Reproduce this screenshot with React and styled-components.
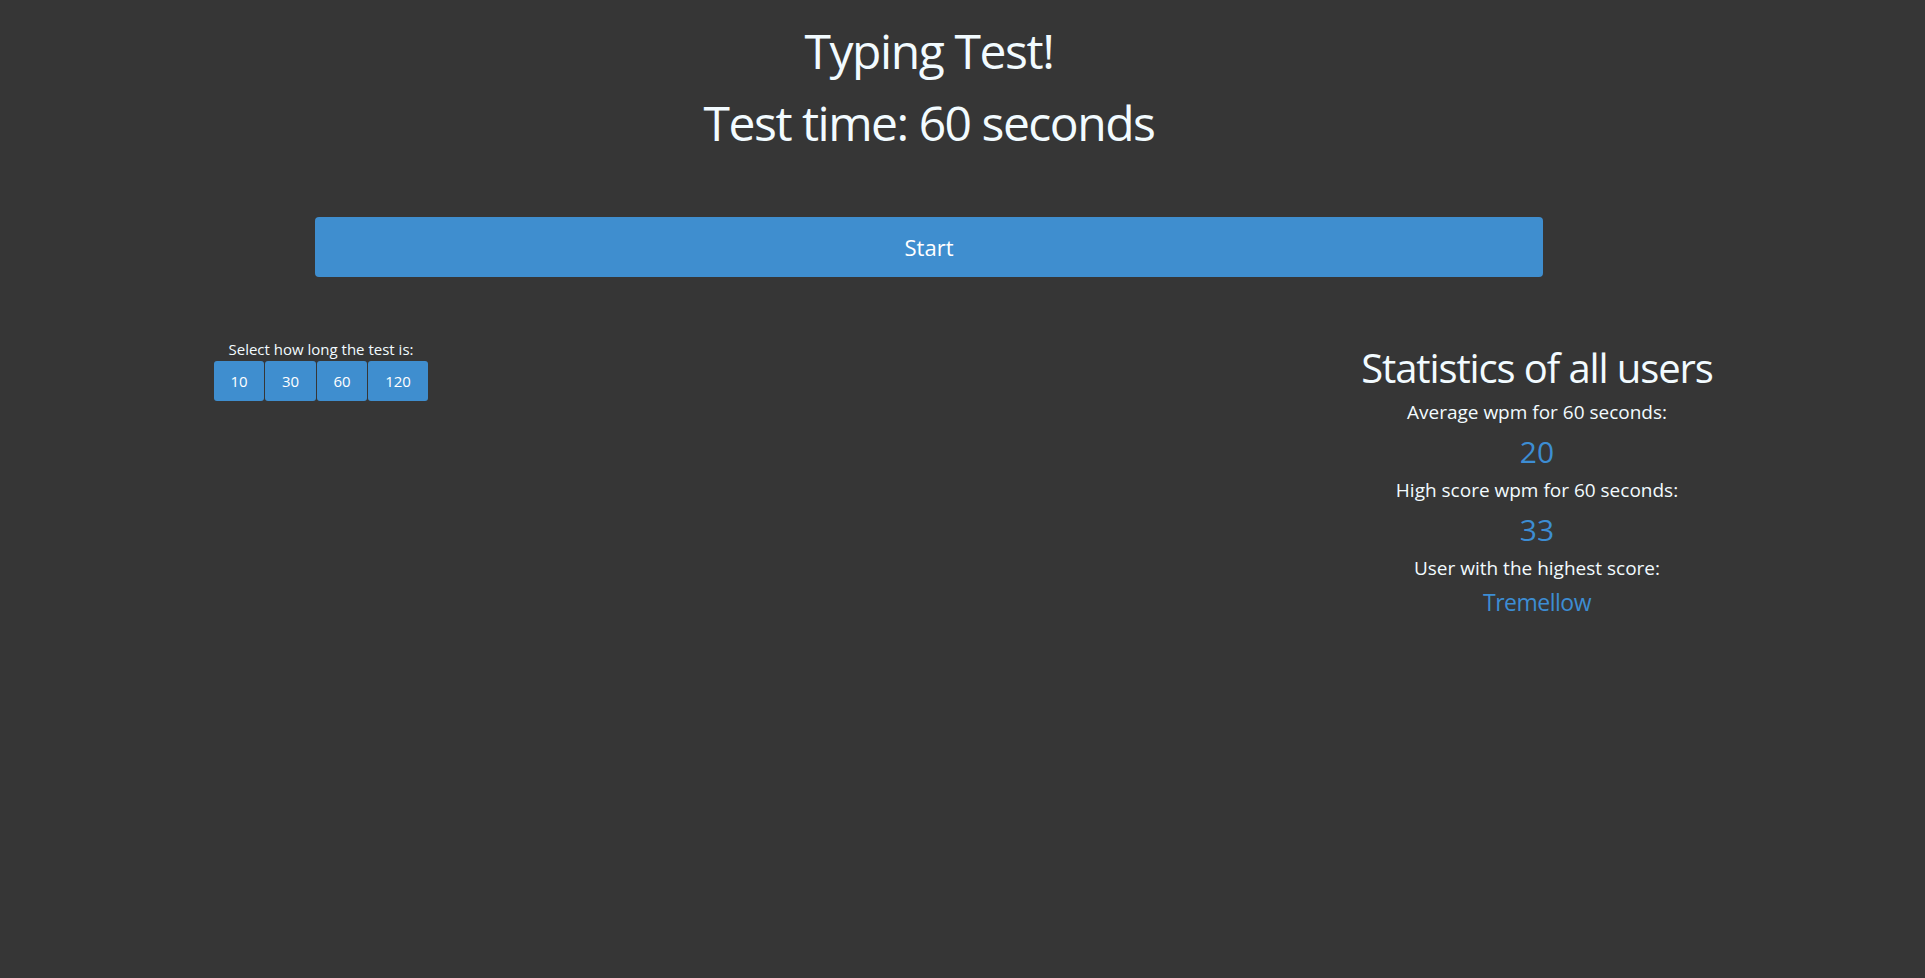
import React from "react";
import styled, { createGlobalStyle } from "styled-components";

const Global = createGlobalStyle`
  html, body { margin: 0; padding: 0; background: #363636; }
  body { font-family: "Open Sans", "Noto Sans", sans-serif; color: #f2fbff; }
  * { box-sizing: border-box; }
`;

const Page = styled.div`
  min-height: 978px;
  background: #363636;
  padding-top: 15px;
`;

const Header = styled.header`
  width: 1858px;
  text-align: center;
`;

const Title = styled.h1`
  margin: 0;
  font-size: 48px;
  font-weight: 400;
  line-height: 72px;
  letter-spacing: ${(p) => p.$ls}px;
`;

const StartButton = styled.button`
  display: block;
  margin: 58px 0 0 315px;
  width: 1228px;
  height: 60px;
  border: none;
  border-radius: 4px;
  background: #3f8ecf;
  color: #ffffff;
  font-family: inherit;
  font-size: 22px;
  cursor: pointer;
`;

const Row = styled.div`
  display: grid;
  grid-template-columns: 642px 1fr 776px;
  margin-top: 62px;
`;

const DurationPanel = styled.div`
  display: flex;
  flex-direction: column;
  align-items: center;
  gap: 2px;
`;

const Label = styled.div`
  font-size: 15px;
  line-height: 20px;
`;

const ButtonGroup = styled.div`
  display: flex;
  gap: 1px;
`;

const DurationButton = styled.button`
  width: ${(p) => p.$w}px;
  height: 40px;
  border: none;
  border-radius: 3px;
  background: #3f8ecf;
  color: #ffffff;
  font-family: inherit;
  font-size: 15px;
  cursor: pointer;
`;

const Stats = styled.div`
  grid-column: 3;
  display: flex;
  flex-direction: column;
  align-items: center;
  padding-top: 4px;
`;

const StatsTitle = styled.h2`
  margin: 0;
  font-size: 40px;
  font-weight: 400;
  line-height: 50px;
  letter-spacing: -1.1px;
`;

const StatLabel = styled.div`
  font-size: 19px;
  line-height: 39px;
`;

const StatValue = styled.div`
  font-size: ${(p) => p.$size}px;
  line-height: ${(p) => p.$lh}px;
  letter-spacing: ${(p) => p.$ls || 0}px;
  color: #3d8dd3;
`;

export default function App() {
  return (
    <>
      <Global />
      <Page>
        <Header>
          <Title $ls={-1.4}>Typing Test!</Title>
          <Title as="h2" $ls={-1.5}>Test time: 60 seconds</Title>
        </Header>
        <StartButton>Start</StartButton>
        <Row>
          <DurationPanel>
            <Label>Select how long the test is:</Label>
            <ButtonGroup>
              <DurationButton $w={50}>10</DurationButton>
              <DurationButton $w={51}>30</DurationButton>
              <DurationButton $w={50}>60</DurationButton>
              <DurationButton $w={60}>120</DurationButton>
            </ButtonGroup>
          </DurationPanel>
          <Stats>
            <StatsTitle>Statistics of all users</StatsTitle>
            <StatLabel>Average wpm for 60 seconds:</StatLabel>
            <StatValue $size={30} $lh={39}>20</StatValue>
            <StatLabel>High score wpm for 60 seconds:</StatLabel>
            <StatValue $size={30} $lh={39}>33</StatValue>
            <StatLabel>User with the highest score:</StatLabel>
            <StatValue $size={23} $lh={28} $ls={-0.5}>Tremellow</StatValue>
          </Stats>
        </Row>
      </Page>
    </>
  );
}
